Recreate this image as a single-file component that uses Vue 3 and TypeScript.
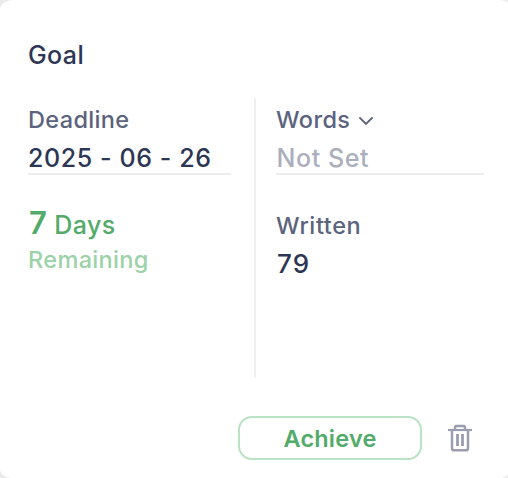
<script setup lang="ts">
const deadline: string = '2025 - 06 - 26'
const daysLeft: number = 7
const written: number = 79
</script>

<template>
  <main class="card">
    <h1 class="title">Goal</h1>
    <div class="columns">
      <section class="column left">
        <div class="label deadline">Deadline</div>
        <div class="field">{{ deadline }}</div>
        <div class="days"><strong>{{ daysLeft }}</strong><span>Days</span></div>
        <div class="remaining">Remaining</div>
      </section>
      <section class="column right">
        <div class="label">
          <span class="words">Words</span>
          <svg class="chevron" width="16" height="10" viewBox="0 0 16 10" fill="none">
            <path d="M1.4 1.4 8 8l6.6-6.6" stroke="currentColor" stroke-width="1.9" />
          </svg>
        </div>
        <div class="field empty">Not Set</div>
        <div class="label written">Written</div>
        <div class="value">{{ written }}</div>
      </section>
    </div>
    <footer class="actions">
      <button class="achieve" type="button">Achieve</button>
      <button class="remove" type="button" aria-label="Delete">
        <svg width="24" height="28" viewBox="0 0 24 28" fill="none" stroke="currentColor">
          <path d="M0 6h24" stroke-width="2.2" />
          <path d="M7 5.5V3.6Q7 2 8.6 2h6.8Q17 2 17 3.6v1.9" stroke-width="2.4" />
          <path d="M4 6v18.2Q4 26.3 6 26.3h12q2 0 2-2.1V6" stroke-width="2.5" />
          <path d="M9.5 10v12M14.5 10v12" stroke-width="2.8" />
        </svg>
      </button>
    </footer>
  </main>
</template>

<style>
body {
  background: #ebebec;
}
</style>

<style scoped>
.card {
  box-sizing: border-box;
  width: 508px;
  height: 478px;
  padding: 37px 24px 18px 28px;
  border-radius: 13px 10px 10px 12px / 9px 3px 4px 9px;
  background: #fff;
  color: #2c3655;
  font-family: Inter, 'Liberation Sans', sans-serif;
  font-size: 24px;
  font-weight: 500;
  line-height: 36px;
  white-space: nowrap;
}

.title {
  margin: 0;
  font-size: 25px;
  font-weight: 500;
  letter-spacing: 0.4px;
}

.columns {
  display: grid;
  grid-template-columns: 228px 228px;
  height: 280px;
  margin-top: 25px;
}

.column {
  box-sizing: border-box;
  padding-top: 4px;
}

.left {
  padding-right: 23px;
  border-right: 2px solid #efeff1;
}

.right {
  padding-left: 20px;
}

.label {
  display: flex;
  align-items: center;
  height: 36px;
  color: #5b637d;
  font-size: 23.5px;
  letter-spacing: 0.6px;
}

.deadline {
  letter-spacing: 0.35px;
}

.words {
  letter-spacing: 0.4px;
}

.chevron {
  margin: 2px 0 0 8px;
}

.field {
  box-sizing: border-box;
  height: 37px;
  padding-top: 2px;
  border-bottom: 2px solid #ededf0;
  font-size: 25px;
  letter-spacing: 0.6px;
}

.empty {
  padding-left: 0.5px;
  color: #abafbd;
}

.days {
  display: flex;
  align-items: baseline;
  gap: 7px;
  height: 36px;
  margin-top: 30px;
  padding-left: 1px;
  color: #52ab68;
  font-size: 25px;
  letter-spacing: 0.4px;
}

.days strong {
  font-size: 31px;
  font-weight: 600;
}

.remaining {
  padding-top: 1px;
  color: #9bd2a8;
  font-size: 23.5px;
  letter-spacing: 0.35px;
}

.written {
  margin-top: 33px;
}

.value {
  padding: 2px 0 0 1px;
  font-size: 26px;
  letter-spacing: 1.2px;
}

.actions {
  display: flex;
  align-items: center;
  justify-content: flex-end;
  gap: 26px;
  margin-top: 38px;
  padding-right: 12px;
}

button {
  padding: 0;
  background: none;
  font: inherit;
}

.achieve {
  box-sizing: border-box;
  width: 184px;
  height: 44px;
  padding-top: 1px;
  border: 2px solid #b9e3c3;
  border-radius: 14px;
  color: #52ab68;
  font-size: 23.5px;
  font-weight: 600;
  letter-spacing: 0.2px;
}

.remove {
  display: flex;
  border: 0;
  color: #9a9eb0;
}
</style>
